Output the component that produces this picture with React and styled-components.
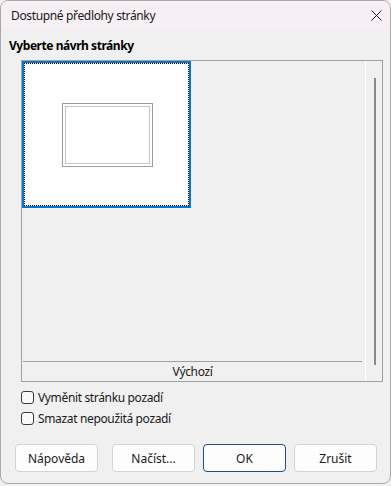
import styled, { createGlobalStyle } from "styled-components"

const Global = createGlobalStyle`
  html, body {
    margin: 0;
    padding: 0;
    background: #f0f0f0;
  }
  body {
    font-family: "Segoe UI", "Noto Sans", "Open Sans", sans-serif;
    font-size: 12px;
    letter-spacing: -0.35px;
    color: #000;
  }
`;

const Window = styled.div`
  box-sizing: border-box;
  width: 391px;
  height: 484px;
  border: 1px solid #a8a8a8;
  border-radius: 8px;
  overflow: hidden;
  background: #f0f0f0;
  display: flex;
  flex-direction: column;
`;

const TitleBar = styled.div`
  height: 29px;
  flex: none;
  background: #f6eff3;
  display: flex;
  align-items: center;
  justify-content: space-between;
  padding: 0 8px 0 10px;
  font-size: 12px;
  color: #1a1a1a;
`;

const CloseBtn = styled.svg`
  width: 11px;
  height: 11px;
`;

const Body = styled.div`
  display: flex;
  flex-direction: column;
  padding: 8px 0 0 8px;
`;

const Heading = styled.div`
  font-weight: 700;
  letter-spacing: -0.45px;
  line-height: 16px;
  height: 16px;
  margin-bottom: 6px;
`;

const ListBox = styled.div`
  box-sizing: border-box;
  margin-left: 12px;
  width: 362px;
  height: 322px;
  border: 1px solid #a0a0a0;
  display: grid;
  grid-template-columns: 343px 1px 16px;
`;

const Content = styled.div`
  display: flex;
  flex-direction: column;
`;

const Items = styled.div`
  flex: 1;
  display: flex;
  align-items: flex-start;
`;

const Tile = styled.div`
  box-sizing: border-box;
  width: 169px;
  height: 147px;
  border: 2px solid #0078d4;
  display: flex;
`;

const TileInner = styled.div`
  flex: 1;
  border: 1px dotted #000;
  background: #fff;
  display: flex;
  align-items: center;
  justify-content: center;
`;

const Preview = styled.div`
  box-sizing: border-box;
  width: 91px;
  height: 64px;
  border: 1px solid #9c9c9c;
  padding: 2px;
  margin-left: 1px;
  display: flex;
`;

const PreviewInner = styled.div`
  flex: 1;
  border: 1px solid #c6c6c6;
`;

const Footer = styled.div`
  height: 19px;
  border-top: 1px solid #a0a0a0;
  margin: 0 3px 0 1px;
  display: flex;
  align-items: center;
  justify-content: center;
  color: #1a1a1a;
`;

const Divider = styled.div`
  background: #fff;
`;

const ScrollTrack = styled.div`
  display: flex;
  justify-content: center;
  padding-top: 17px;
  padding-bottom: 16px;
`;

const Thumb = styled.div`
  width: 2px;
  margin-left: 1px;
  background: #8a8a8a;
`;

const Options = styled.div`
  margin: 5px 0 0 12px;
  display: flex;
  flex-direction: column;
`;

const Option = styled.label`
  height: 21px;
  display: flex;
  align-items: center;
  gap: 4px;
  color: #1a1a1a;
`;

const Box = styled.span`
  box-sizing: border-box;
  width: 13px;
  height: 13px;
  border: 1px solid #3a3a3a;
  border-radius: 3px;
  background: #f9f9f9;
`;

const Buttons = styled.div`
  display: flex;
  gap: 8px;
  margin: 15px 0 0 6px;
`;

const Button = styled.button`
  box-sizing: border-box;
  width: 83px;
  height: 28px;
  border-radius: 4px;
  border: 1px solid ${p => (p.$primary ? "#1f4f82" : "#d3d3d3")};
  background: #fdfdfd;
  font: inherit;
  color: #1a1a1a;
  margin-right: ${p => (p.$spaced ? "6px" : "0")};
`;

export default function App() {
  return (
    <>
      <Global />
      <Window>
        <TitleBar>
          <span>Dostupné předlohy stránky</span>
          <CloseBtn viewBox="0 0 11 11">
            <path d="M0.5 0.5 L10.5 10.5 M10.5 0.5 L0.5 10.5" stroke="#1a1a1a" strokeWidth="1" fill="none" />
          </CloseBtn>
        </TitleBar>
        <Body>
          <Heading>Vyberte návrh stránky</Heading>
          <ListBox>
            <Content>
              <Items>
                <Tile>
                  <TileInner>
                    <Preview>
                      <PreviewInner />
                    </Preview>
                  </TileInner>
                </Tile>
              </Items>
              <Footer>Výchozí</Footer>
            </Content>
            <Divider />
            <ScrollTrack>
              <Thumb />
            </ScrollTrack>
          </ListBox>
          <Options>
            <Option><Box />Vyměnit stránku pozadí</Option>
            <Option><Box />Smazat nepoužitá pozadí</Option>
          </Options>
          <Buttons>
            <Button $spaced>Nápověda</Button>
            <Button>Načíst...</Button>
            <Button $primary>OK</Button>
            <Button>Zrušit</Button>
          </Buttons>
        </Body>
      </Window>
    </>
  )
}
